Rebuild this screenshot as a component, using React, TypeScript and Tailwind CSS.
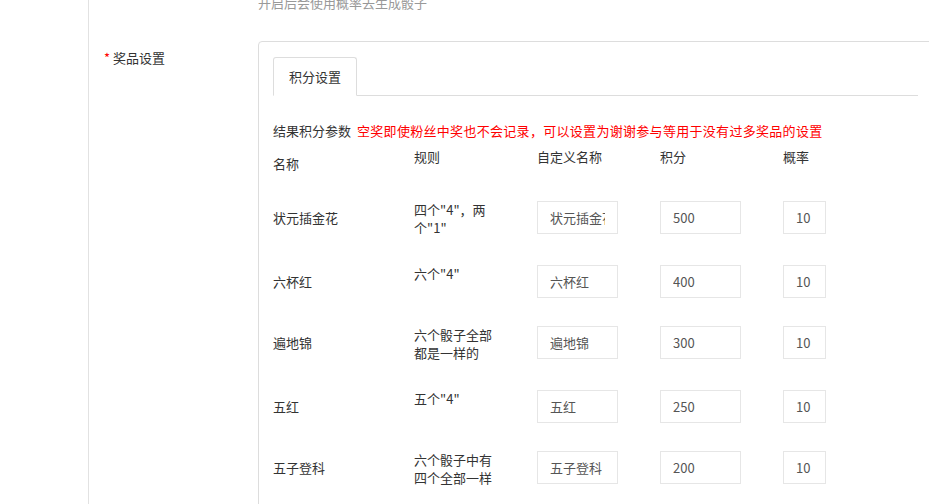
import React from "react";

type Row = { name: string; rule: string; custom: string; points: string; prob: string };

const rows: Row[] = [
  { name: "状元插金花", rule: "四个\"4\"，两个\"1\"", custom: "状元插金花", points: "500", prob: "10" },
  { name: "六杯红", rule: "六个\"4\"", custom: "六杯红", points: "400", prob: "10" },
  { name: "遍地锦", rule: "六个骰子全部都是一样的", custom: "遍地锦", points: "300", prob: "10" },
  { name: "五红", rule: "五个\"4\"", custom: "五红", points: "250", prob: "10" },
  { name: "五子登科", rule: "六个骰子中有四个全部一样", custom: "五子登科", points: "200", prob: "10" },
];

function Field({ value, w }: { value: string; w: string }) {
  return (
    <input
      readOnly
      value={value}
      className={`${w} h-[33px] border border-[#e6e6e6] bg-white px-[12px] text-[13px] text-[#555] outline-none`}
    />
  );
}

export default function App() {
  return (
    <div className='h-[504px] w-full overflow-hidden bg-white text-[13px] leading-[18px] text-[#333] font-["Noto_Sans_CJK_SC","Noto_Sans",sans-serif]'>
      <div className="flex h-[504px]">
        <div className="w-[89px] shrink-0 border-r border-[#e2e2e2]" />
        <div className="min-w-0 flex-1">
          <div className="-mt-[6px] pl-[169px] text-[#999]">开启后会使用概率去生成骰子</div>
          <div className="mt-[29px] flex">
            <div className="w-[169px] shrink-0 pl-[15px] pt-[8px]">
              <span className="mr-[3px] text-[#ff0000]">*</span>
              <span>奖品设置</span>
            </div>
            <div className="w-[675px] shrink-0 rounded-[4px] border border-[#dddddd] px-[14px] pt-[15px] pb-[20px]">
              <div className="flex border-b border-[#dddddd]">
                <div className="-mb-px rounded-t-[3px] border border-[#dddddd] border-b-white bg-white px-[15px] leading-[37px]">
                  积分设置
                </div>
              </div>
              <div className="mt-[26px] flex">
                <span>结果积分参数</span>
                <span className="ml-[6px] tracking-[0.3px] text-[#ff0000]">空奖即使粉丝中奖也不会记录，可以设置为谢谢参与等用于没有过多奖品的设置</span>
              </div>
              <div className="mt-[8px] mb-[7px] grid grid-cols-[141px_123px_123px_123px_1fr] items-start">
                <div className="leading-[32px]">名称</div>
                <div>规则</div>
                <div>自定义名称</div>
                <div>积分</div>
                <div>概率</div>
              </div>
              {rows.map((r) => (
                <div
                  key={r.name}
                  className="grid grid-cols-[141px_123px_123px_123px_1fr] items-start py-[14px]"
                >
                  <div className="leading-[33px]">{r.name}</div>
                  <div className="w-[80px] break-all">{r.rule}</div>
                  <div>
                    <Field value={r.custom} w="w-[81px]" />
                  </div>
                  <div>
                    <Field value={r.points} w="w-[81px]" />
                  </div>
                  <div>
                    <Field value={r.prob} w="w-[43px]" />
                  </div>
                </div>
              ))}
            </div>
          </div>
        </div>
      </div>
    </div>
  );
}
